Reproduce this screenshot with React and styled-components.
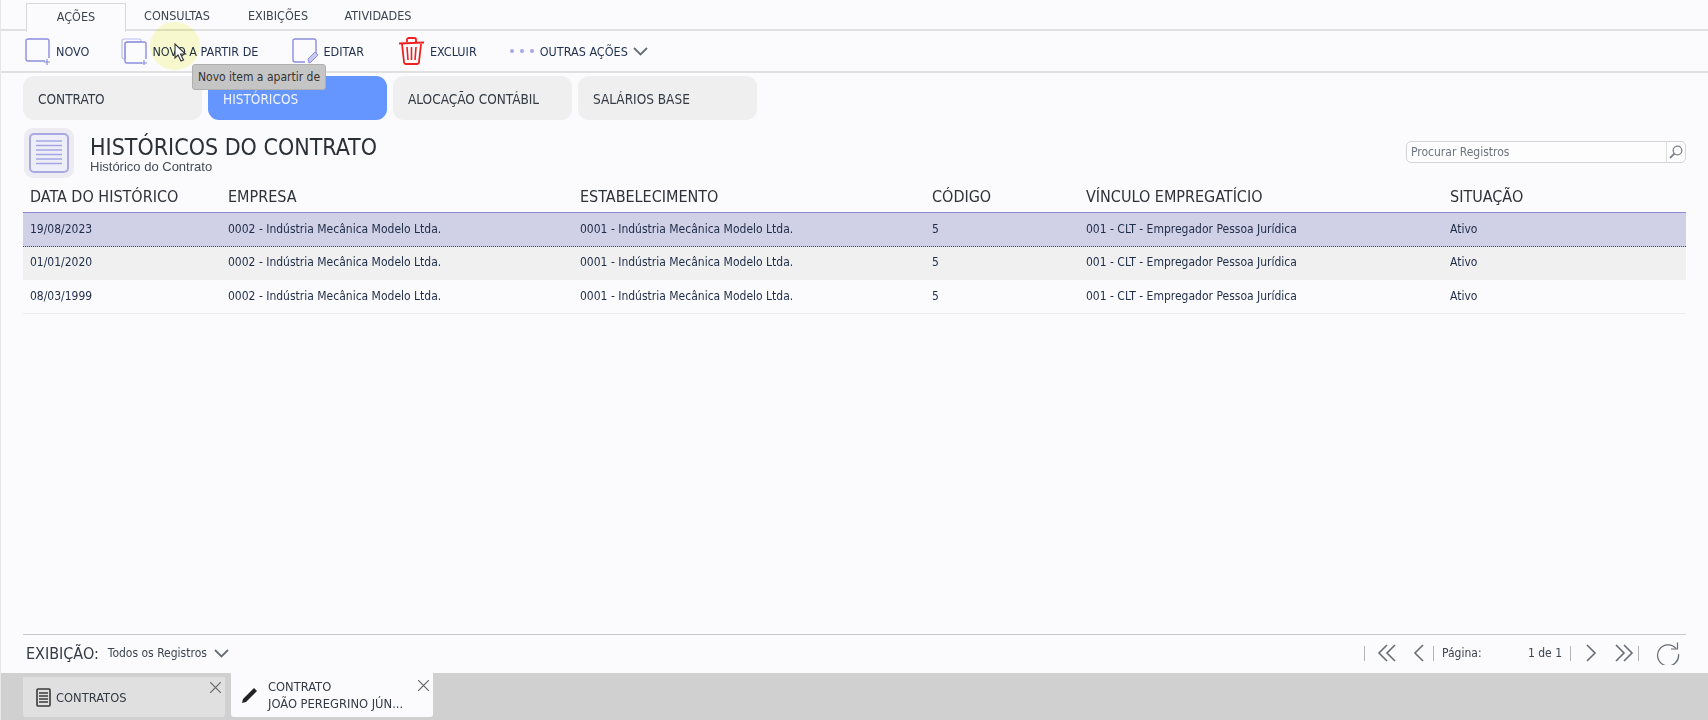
import React from 'react';
import styled, { createGlobalStyle } from 'styled-components';

const Global = createGlobalStyle`
  html, body { margin: 0; padding: 0; height: 100%; background: #fbfbfd; overflow: hidden; }
  #root { height: 720px; }
  * { box-sizing: border-box; }
`;
const Page = styled.div`
  position: relative; width: 1708px; height: 720px; display: flex; flex-direction: column;
  background: #fbfbfd; color: #2f3a4a; font-family: "DejaVu Sans Condensed", "Noto Sans", sans-serif; overflow: hidden;
  border-left: 1px solid #e4e8e8;
`;
const RibbonTabs = styled.div`
  height: 31px; flex: none; padding: 3px 0 0 25px; display: flex; align-items: stretch;
  border-bottom: 2px solid #e0e0e0;
`;
const RibbonTab = styled.div`
  width: ${p => p.$w}px; display: flex; align-items: center; justify-content: center;
  padding-bottom: ${p => (p.$active ? 4 : 2)}px;
  font-size: 12.5px; color: #3c4450; height: ${p => (p.$active ? 29 : 27)}px;
  ${p => p.$active && `background:#fbfbfd;border:1px solid #d8d8d8;border-bottom:none;`}
`;
const Toolbar = styled.div`
  height: 42px; flex: none; display: flex; align-items: center; padding-left: 23px;
  border-bottom: 2px solid #e0e0e0;
`;
const Action = styled.div`
  display: flex; align-items: center; gap: ${p => p.$gap ?? 5}px; margin-right: ${p => p.$mr}px;
  font-size: 12.5px; color: #1f2f4d; white-space: nowrap;
`;
const SectionTabs = styled.div`
  flex: none; display: flex; gap: 6px; padding: 3px 0 0 22px; height: 47px;
`;
const SectionTab = styled.div`
  width: 179px; height: 44px; border-radius: 11px; display: flex; align-items: center; padding: 1px 0 0 15px;
  font-size: 13.5px; background: ${p => (p.$active ? '#6595fe' : '#efefef')};
  color: ${p => (p.$active ? '#f2f5ff' : '#333a44')};
`;
const Header = styled.div`
  flex: none; height: 58px; display: flex; align-items: flex-start; padding: 8px 22px 0 23px;
`;
const HeaderIcon = styled.div`
  width: 50px; height: 50px; border-radius: 9px; background: #ececf2; display: flex; align-items: center; justify-content: center;
`;
const Titles = styled.div`
  margin-left: 16px; flex: 1; display: flex; flex-direction: column;
`;
const Title = styled.div`
  font-size: 23px; line-height: 26px; color: #2b2f36; margin-top: 6px;
`;
const Subtitle = styled.div`
  font-family: "Liberation Sans", sans-serif; font-size: 13px; line-height: 15px; color: #444b57; margin-top: -1px;
`;
const Search = styled.div`
  margin-top: 13px; width: 280px; height: 22px; border: 1px solid #d4d4d8; border-radius: 5px;
  display: flex; align-items: center; background: #fdfdfd;
`;
const SearchText = styled.div`
  flex: 1; font-size: 12px; color: #6d7480; padding-left: 4px;
`;
const SearchBtn = styled.div`
  width: 19px; height: 100%; border-left: 1px solid #dcdcdc; display: flex; align-items: center; justify-content: center;
`;
const Table = styled.div`
  flex: none; margin: 0 22px;
`;
const COLS = '198px 352px 352px 154px 364px 1fr';
const HeadRow = styled.div`
  display: grid; grid-template-columns: ${COLS}; height: 35px; align-items: center; padding: 2px 0 0 7px;
  border-bottom: 1px solid #8c8cd0; font-size: 16px; color: #2f3238;
`;
const Row = styled.div`
  display: grid; grid-template-columns: ${COLS}; height: ${p => p.$h}px; align-items: center; padding: 0 0 2px 7px;
  font-size: 12px; color: #1e2c48; background: ${p => p.$bg};
  border-bottom: 1px ${p => p.$line};
`;
const Spacer = styled.div`flex: 1;`;
const Footer = styled.div`
  flex: none; margin: 0 22px; height: 39px; border-top: 1px solid #c8c8c8; display: flex; align-items: center; padding: 0 6px 2px 3px;
`;
const FooterLabel = styled.div`font-size: 16px; color: #333a44; margin-right: 9px;`;
const FooterValue = styled.div`font-size: 12px; color: #3c4450; margin-right: 7px;`;
const Pager = styled.div`margin-left: auto; display: flex; align-items: center; height: 100%;`;
const PagerText = styled.div`font-size: 12px; color: #3c4450; white-space: nowrap; width: ${p => p.$w}px; text-align: ${p => p.$align || 'left'};`;
const Sep = styled.div`width: 1px; height: 15px; background: #b4b4b4; margin: 0 ${p => p.$r ?? 8}px 0 ${p => p.$l ?? 8}px;`;
const Gap = styled.div`width: ${p => p.$w}px;`;
const Taskbar = styled.div`
  flex: none; height: 47px; background: #d0d0d0; display: flex; gap: 6px; padding-left: 22px; align-items: flex-start;
`;
const Task = styled.div`
  position: relative; width: 202px; display: flex; align-items: center;
  height: ${p => (p.$active ? 44 : 40)}px; margin-top: ${p => (p.$active ? 0 : 4)}px;
  background: ${p => (p.$active ? '#fbfbfd' : '#e0e0e0')}; border-radius: 0 0 3px 3px;
  padding-left: ${p => (p.$active ? 10 : 13)}px; gap: ${p => (p.$active ? 9 : 5)}px;
  font-size: 12.8px; color: #333a44;
`;
const TaskLines = styled.div`line-height: 17px; white-space: nowrap;`;
const Close = styled.div`position: absolute; right: 4px; top: ${p => p.$top}px; display: flex;`;
const Halo = styled.div`
  position: absolute; left: 149px; top: 22px; width: 50px; height: 48px; border-radius: 50%; background: #fcfcd0; mix-blend-mode: multiply;
`;
const Cursor = styled.div`position: absolute; left: 173px; top: 43px; display: flex;`;
const Tooltip = styled.div`
  position: absolute; left: 191px; top: 64px; width: 134px; height: 26px; border-radius: 3px;
  background: #c5c5c5; border: 1px solid #b0b0b0; display: flex; align-items: center; justify-content: center;
  font-size: 12px; color: #333;
`;

const C = '#8c8ee0';
const Plus = ({ x, y }) => <path d={`M${x - 3} ${y}h6M${x} ${y - 3}v6`} stroke={C} strokeWidth="1.2" />;
const NewIcon = () => (
  <svg width="27" height="27" viewBox="0 0 27 27" fill="none">
    <path d="M21 23H4a2 2 0 0 1-2-2V3a2 2 0 0 1 2-2h19a2 2 0 0 1 2 2v17" stroke={C} strokeWidth="1.4" />
    <Plus x={23} y={24} />
  </svg>
);
const CopyIcon = () => (
  <svg width="28" height="27" viewBox="0 0 28 27" fill="none">
    <path d="M2 3a2 2 0 0 1 2-2h15a2 2 0 0 1 2 2v1H7a2 2 0 0 0-2 2v15H4a2 2 0 0 1-2-2z" stroke="#b9bbec" strokeWidth="1.2" />
    <path d="M22 25H7a2 2 0 0 1-2-2V6a2 2 0 0 1 2-2h17a2 2 0 0 1 2 2v15" stroke={C} strokeWidth="1.4" />
    <Plus x={24} y={25} />
  </svg>
);
const EditIcon = () => (
  <svg width="27" height="27" viewBox="0 0 27 27" fill="none">
    <path d="M14 24H4a2 2 0 0 1-2-2V3a2 2 0 0 1 2-2h19a2 2 0 0 1 2 2v13" stroke={C} strokeWidth="1.4" />
    <path d="M18 25l-1-4 7-7 3 3-7 7z" fill="#c9caf2" stroke={C} strokeWidth="1" />
  </svg>
);
const TrashIcon = () => (
  <svg width="27" height="28" viewBox="0 0 27 28" fill="none" stroke="#ee2020" strokeWidth="1.8">
    <path d="M1 6.500L26 5.500M9 5V2.500C9 1.700 10 1 11 1h5c1 0 2 .7 2 1.500V5" />
    <path d="M4 7l2 18c.1 1.200 1 2 2 2h11c1 0 1.900-.8 2-2l2-18" />
    <path d="M9 10l1 13M13.500 10v13M18 10l-1 13" strokeWidth="1.6" />
  </svg>
);
const Dots = () => (
  <svg width="26" height="6" viewBox="0 0 26 6" fill="#a6a8e6">
    <circle cx="3" cy="3" r="2" /><circle cx="13" cy="3" r="2" /><circle cx="23" cy="3" r="2" />
  </svg>
);
const Chevron = ({ color = '#686d75' }) => (
  <svg width="15" height="9" viewBox="0 0 15 9" fill="none" stroke={color} strokeWidth="1.8"><path d="M1 1l6.500 6.500L14 1" /></svg>
);
const DocIcon = () => (
  <svg width="42" height="42" viewBox="0 0 42 42" fill="none">
    <rect x="2" y="2" width="38" height="38" rx="4" fill="#eeeef8" stroke="#a9aae4" strokeWidth="2" />
    <path d="M8 9h26M8 13.500h26M8 18h26M8 22.500h26M8 27h26M8 31.500h26" stroke="#a4a6e4" strokeWidth="1.4" />
  </svg>
);
const SearchIcon = () => (
  <svg width="14" height="14" viewBox="0 0 14 14" fill="none" stroke="#7d838c" strokeWidth="1.3">
    <circle cx="8.500" cy="5.500" r="4.300" /><path d="M5.500 8.500L1 13" strokeWidth="1.8" />
  </svg>
);
const Glyph = ({ w, d }) => (
  <svg width={w} height="18" viewBox={`0 0 ${w} 18`} fill="none" stroke="#676c74" strokeWidth="1.6"><path d={d} /></svg>
);
const ListIcon = () => (
  <svg width="15" height="19" viewBox="0 0 15 19" fill="none" stroke="#3a3a3a">
    <rect x="1" y="1" width="13" height="17" rx="1" strokeWidth="1.6" />
    <path d="M3 5h9M3 8h9M3 11h9M3 14h9" strokeWidth="1.6" />
  </svg>
);
const PenIcon = () => (
  <svg width="18" height="18" viewBox="0 0 18 18"><path d="M1 17l1-4L13 2l3 3L5 16z" fill="#222" /></svg>
);
const X = () => (
  <svg width="11" height="11" viewBox="0 0 11 11" stroke="#666" strokeWidth="1.2"><path d="M0 0l11 11M11 0L0 11" /></svg>
);
const Pointer = () => (
  <svg width="13" height="19" viewBox="0 0 13 19"><path d="M1 1v14l3-3 3 6 2.500-1-3-6h5z" fill="#fff" stroke="#333" strokeWidth="1.1" /></svg>
);
const Refresh = () => (
  <svg width="24" height="24" viewBox="0 0 24 24" fill="none" stroke="#676c74" strokeWidth="1.2">
    <path d="M20 7.500A10.500 10.500 0 1 0 22.500 13" /><path d="M21.500 1.500V8H15" />
  </svg>
);

const heads = ['DATA DO HISTÓRICO', 'EMPRESA', 'ESTABELECIMENTO', 'CÓDIGO', 'VÍNCULO EMPREGATÍCIO', 'SITUAÇÃO'];
const rows = [
  { date: '19/08/2023', bg: '#d0d0e6', h: 34, line: 'dotted #444' },
  { date: '01/01/2020', bg: '#f0f0f0', h: 33, line: 'solid #f0f0f0' },
  { date: '08/03/1999', bg: '#fbfbfd', h: 34, line: 'solid #ececee' },
];

export default function App() {
  return (
    <Page>
      <Global />
      <RibbonTabs>
        <RibbonTab $active $w={100}>AÇÕES</RibbonTab>
        <RibbonTab $w={102}>CONSULTAS</RibbonTab>
        <RibbonTab $w={100}>EXIBIÇÕES</RibbonTab>
        <RibbonTab $w={100}>ATIVIDADES</RibbonTab>
      </RibbonTabs>
      <Toolbar>
        <Action $mr={31}><NewIcon />NOVO</Action>
        <Action $mr={33} $gap={4}><CopyIcon />NOVO A PARTIR DE</Action>
        <Action $mr={34}><EditIcon />EDITAR</Action>
        <Action $mr={32}><TrashIcon />EXCLUIR</Action>
        <Action><Dots />OUTRAS AÇÕES<Chevron /></Action>
      </Toolbar>
      <SectionTabs>
        <SectionTab>CONTRATO</SectionTab>
        <SectionTab $active>HISTÓRICOS</SectionTab>
        <SectionTab>ALOCAÇÃO CONTÁBIL</SectionTab>
        <SectionTab>SALÁRIOS BASE</SectionTab>
      </SectionTabs>
      <Header>
        <HeaderIcon><DocIcon /></HeaderIcon>
        <Titles>
          <Title>HISTÓRICOS DO CONTRATO</Title>
          <Subtitle>Histórico do Contrato</Subtitle>
        </Titles>
        <Search>
          <SearchText>Procurar Registros</SearchText>
          <SearchBtn><SearchIcon /></SearchBtn>
        </Search>
      </Header>
      <Table>
        <HeadRow>{heads.map(h => <div key={h}>{h}</div>)}</HeadRow>
        {rows.map(r => (
          <Row key={r.date} $bg={r.bg} $h={r.h} $line={r.line}>
            <div>{r.date}</div>
            <div>0002 - Indústria Mecânica Modelo Ltda.</div>
            <div>0001 - Indústria Mecânica Modelo Ltda.</div>
            <div>5</div>
            <div>001 - CLT - Empregador Pessoa Jurídica</div>
            <div>Ativo</div>
          </Row>
        ))}
      </Table>
      <Spacer />
      <Footer>
        <FooterLabel>EXIBIÇÃO:</FooterLabel>
        <FooterValue>Todos os Registros</FooterValue>
        <Chevron />
        <Pager>
          <Sep $l={0} $r={12} />
          <Glyph w={20} d="M10 1L2 9l8 8M18 1l-8 8 8 8" />
          <Gap $w={15} />
          <Glyph w={13} d="M11 1L3 9l8 8" />
          <Sep />
          <PagerText $w={84}>Página:</PagerText>
          <PagerText $w={36} $align="right">1 de 1</PagerText>
          <Sep />
          <Gap $w={6} />
          <Glyph w={13} d="M2 1l8 8-8 8" />
          <Gap $w={16} />
          <Glyph w={20} d="M2 1l8 8-8 8M10 1l8 8-8 8" />
          <Sep $l={4} $r={17} />
          <Refresh />
        </Pager>
      </Footer>
      <Taskbar>
        <Task><ListIcon />CONTRATOS<Close $top={5}><X /></Close></Task>
        <Task $active><PenIcon /><TaskLines>CONTRATO<br />JOÃO PEREGRINO JÚN...</TaskLines><Close $top={7}><X /></Close></Task>
      </Taskbar>
      <Halo />
      <Cursor><Pointer /></Cursor>
      <Tooltip>Novo item a apartir de</Tooltip>
    </Page>
  );
}
